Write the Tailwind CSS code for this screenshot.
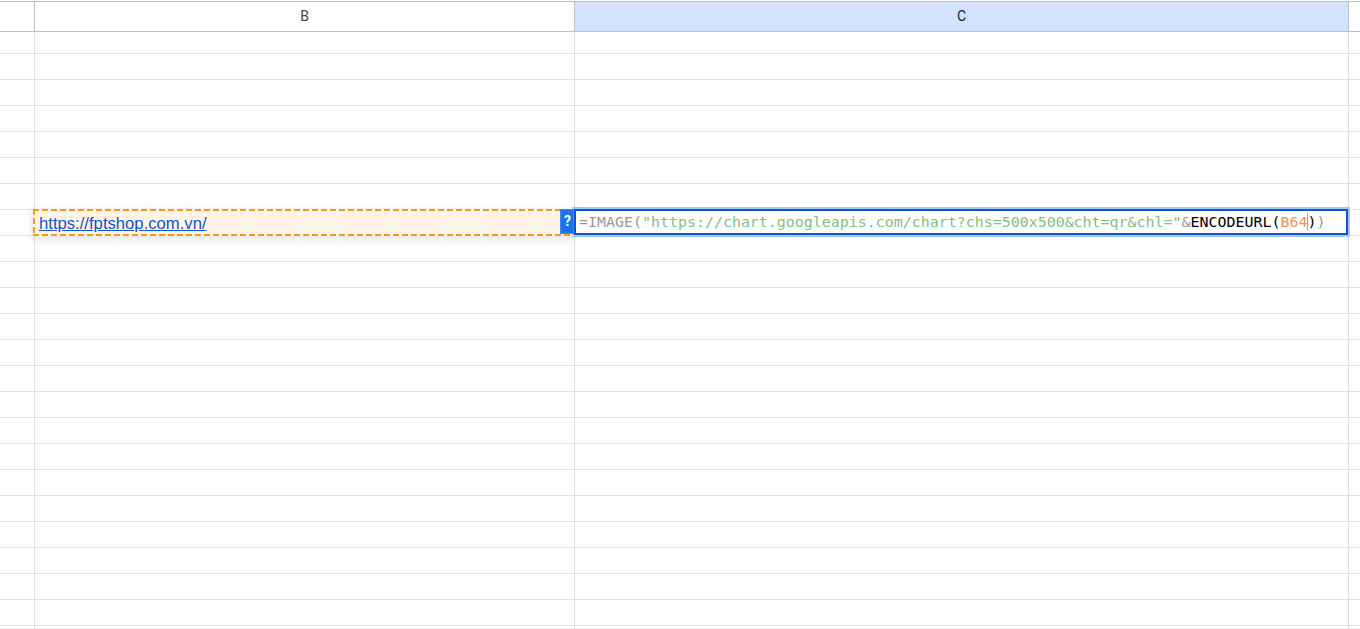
<!DOCTYPE html>
<html lang="en">
<head>
  <meta charset="UTF-8">
  <meta name="viewport" content="width=device-width, initial-scale=1.0">
  <title>Spreadsheet</title>
  <script src="https://cdn.jsdelivr.net/npm/@tailwindcss/browser@4"></script>
</head>
<body class="bg-white font-['Liberation_Sans',Arial,sans-serif] overflow-hidden">
  <div class="h-[629px] w-[1360px] overflow-hidden flex flex-col pt-px">
    <!-- Column headers -->
    <div class="h-[31px] shrink-0 flex border-y border-[#c0c0c0] text-[14px] leading-[29px] text-center font-[Roboto,sans-serif]">
      <div class="w-[35px] border-r border-[#c0c0c0]"></div>
      <div class="w-[540px] border-r border-[#c0c0c0] text-[#444746]">B</div>
      <div class="w-[774px] border-r border-[#c0c0c0] bg-[#d3e3fd] text-[#041e49]">C</div>
      <div class="flex-1"></div>
    </div>

    <!-- Grid -->
    <div id="above" class="shrink-0"></div>

    <!-- Row being edited -->
    <div class="h-[26px] shrink-0 flex border-b border-[#e1e1e1]">
      <div class="w-[35px] border-r border-[#e1e1e1]"></div>
      <div class="relative w-[540px] border-r border-[#e1e1e1]">
        <svg class="absolute -left-[2px] -top-px h-[27px] w-[541px] bg-[#fef4e7] shadow-[0_2px_6px_2px_rgba(60,64,67,0.12)]" fill="none" stroke="#f7981d" stroke-width="2" stroke-dasharray="6 3">
          <path d="M0 1H541M0 26H541M1 0V27" />
        </svg>
        <a href="#" class="absolute left-1 top-1 text-[16.67px] leading-[20px] text-[#1155cc] underline">https://fptshop.com.vn/</a>
        <div class="absolute z-10 right-0 -top-px h-[25px] w-[14px] bg-[#1a73e8] border border-[#4285f4] pl-px text-white text-[14px] leading-[22px] font-bold text-center font-[Roboto,sans-serif]">?</div>
      </div>
      <div class="relative w-[774px] border-r border-[#e1e1e1]">
        <div class="absolute -left-px -top-px h-[26px] w-[774px] bg-white border-2 border-[#0b57d0] outline-2 outline-[#a8c7fa] pl-[3px] whitespace-pre font-['DejaVu_Sans_Mono',monospace] text-[14.94px] leading-[22px] text-[#999]">=IMAGE(<span class="text-[#7fc184]">"https://chart.googleapis.com/chart?chs=500x500&amp;cht=qr&amp;chl="</span>&amp;<span class="text-black">ENCODEURL(</span><span class="text-[#f7914d]">B64</span><span class="text-black">)</span>)</div>
        <div class="absolute left-[732px] top-[3px] h-[18px] w-px bg-[#f7981d]"></div>
      </div>
      <div class="flex-1"></div>
    </div>

    <div id="below" class="shrink-0"></div>
  </div>

<script>
const row = (height) => `
  <div class="${height} flex border-b border-[#e1e1e1]">
    <div class="w-[35px] border-r border-[#e1e1e1]"></div>
    <div class="w-[540px] border-r border-[#e1e1e1]"></div>
    <div class="w-[774px] border-r border-[#e1e1e1]"></div>
    <div class="flex-1"></div>
  </div>`;

// the first visible row is partly scrolled under the header
document.getElementById('above').innerHTML = row('h-[22px]') + row('h-[26px]').repeat(6);
document.getElementById('below').innerHTML = row('h-[26px]').repeat(16);
</script>
</body>
</html>
